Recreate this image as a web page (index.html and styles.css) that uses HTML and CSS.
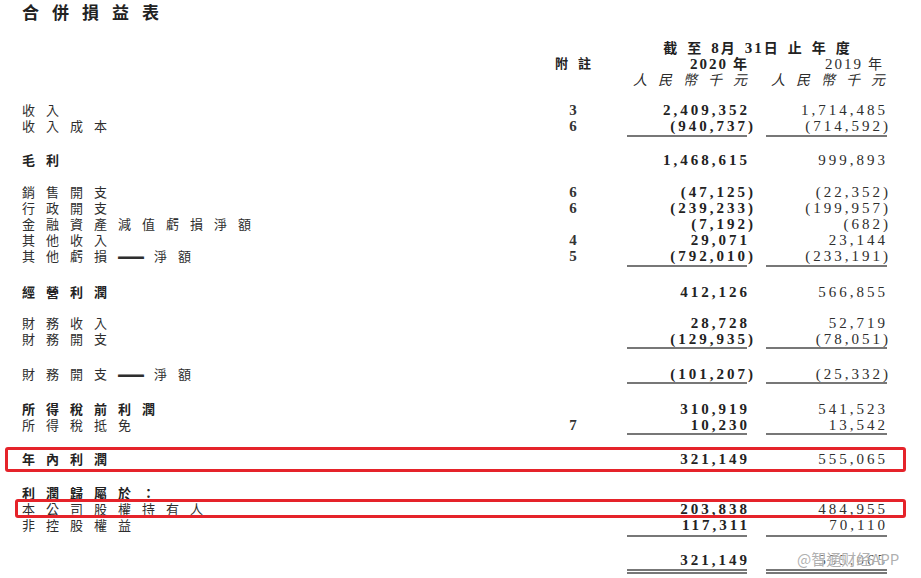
FILE: index.html
```html
<!DOCTYPE html>
<html lang="zh-Hant">
<head>
<meta charset="utf-8">
<title>合併損益表</title>
<link rel="stylesheet" href="styles.css">
</head>
<body>
<div class="page">
  <h1 class="title">合併損益表</h1>

  <div class="row period-row sp15">
    <span></span><span></span>
    <span class="period">截至<span class="num">8</span>月<span class="num">31</span>日止年度</span>
  </div>
  <div class="row">
    <span></span>
    <span class="note hdr">附註</span>
    <span class="val v1 yr b"><span class="num">2020</span>年</span>
    <span class="val v2 yr"><span class="num">2019</span>年</span>
  </div>
  <div class="row">
    <span></span><span></span>
    <span class="val v1 unit">人民幣千元</span>
    <span class="val v2 unit">人民幣千元</span>
  </div>

  <div class="row sp15"><span class="lbl">收入</span><span class="note">3</span><span class="val v1 b">2,409,352</span><span class="val v2">1,714,485</span></div>
  <div class="row"><span class="lbl">收入成本</span><span class="note">6</span><span class="val v1 b neg">(940,737)</span><span class="val v2 neg">(714,592)</span></div>
  <div class="rule sp1"><span></span><span></span><i class="ln"></i><i class="ln ln2"></i></div>

  <div class="row sp15"><span class="lbl b">毛利</span><span class="note"></span><span class="val v1 b">1,468,615</span><span class="val v2">999,893</span></div>

  <div class="row sp16"><span class="lbl">銷售開支</span><span class="note">6</span><span class="val v1 b neg">(47,125)</span><span class="val v2 neg">(22,352)</span></div>
  <div class="row"><span class="lbl">行政開支</span><span class="note">6</span><span class="val v1 b neg">(239,233)</span><span class="val v2 neg">(199,957)</span></div>
  <div class="row"><span class="lbl">金融資產減值虧損淨額</span><span class="note"></span><span class="val v1 b neg">(7,192)</span><span class="val v2 neg">(682)</span></div>
  <div class="row"><span class="lbl">其他收入</span><span class="note">4</span><span class="val v1 b">29,071</span><span class="val v2">23,144</span></div>
  <div class="row"><span class="lbl">其他虧損<span class="dash">—</span>淨額</span><span class="note">5</span><span class="val v1 b neg">(792,010)</span><span class="val v2 neg">(233,191)</span></div>
  <div class="rule sp1"><span></span><span></span><i class="ln"></i><i class="ln ln2"></i></div>

  <div class="row sp17"><span class="lbl b">經營利潤</span><span class="note"></span><span class="val v1 b">412,126</span><span class="val v2">566,855</span></div>

  <div class="row sp15"><span class="lbl">財務收入</span><span class="note"></span><span class="val v1 b">28,728</span><span class="val v2">52,719</span></div>
  <div class="row"><span class="lbl">財務開支</span><span class="note"></span><span class="val v1 b neg">(129,935)</span><span class="val v2 neg">(78,051)</span></div>
  <div class="rule"><span></span><span></span><i class="ln"></i><i class="ln ln2"></i></div>

  <div class="row sp17"><span class="lbl">財務開支<span class="dash">—</span>淨額</span><span class="note"></span><span class="val v1 b neg">(101,207)</span><span class="val v2 neg">(25,332)</span></div>
  <div class="rule"><span></span><span></span><i class="ln"></i><i class="ln ln2"></i></div>

  <div class="row sp17"><span class="lbl b">所得稅前利潤</span><span class="note"></span><span class="val v1 b">310,919</span><span class="val v2">541,523</span></div>
  <div class="row"><span class="lbl">所得稅抵免</span><span class="note">7</span><span class="val v1 b">10,230</span><span class="val v2">13,542</span></div>
  <div class="rule"><span></span><span></span><i class="ln"></i><i class="ln ln2"></i></div>

  <div class="row sp16 mark mark-a"><span class="lbl b">年內利潤</span><span class="note"></span><span class="val v1 b">321,149</span><span class="val v2">555,065</span></div>

  <div class="row sp18"><span class="lbl b">利潤歸屬於：</span></div>
  <div class="row mark mark-b"><span class="lbl">本公司股權持有人</span><span class="note"></span><span class="val v1 b">203,838</span><span class="val v2">484,955</span></div>
  <div class="row"><span class="lbl">非控股權益</span><span class="note"></span><span class="val v1 b">117,311</span><span class="val v2">70,110</span></div>
  <div class="rule sp2"><span></span><span></span><i class="ln"></i><i class="ln ln2"></i></div>

  <div class="row sp15"><span class="lbl"></span><span class="note"></span><span class="val v1 b">321,149</span><span class="val v2">555,065</span></div>
  <div class="rule dbl sp1"><span></span><span></span><i class="ln"></i><i class="ln ln2"></i></div>

  <div class="watermark">@智通财经APP</div>
</div>
</body>
</html>
```

FILE: styles.css
```css
html, body {
  margin: 0;
  padding: 0;
  background: #ffffff;
}

.page {
  position: relative;
  width: 921px;
  height: 578px;
  padding-left: 22px;
  box-sizing: border-box;
  color: #2b2b2b;
  font-family: "Noto Sans CJK TC", "Noto Sans CJK SC", sans-serif;
  overflow: hidden;
}

.title {
  margin: 0;
  height: 24px;
  line-height: 23px;
  font-size: 17px;
  font-weight: 700;
  letter-spacing: 13px;
  color: #222;
}

.row,
.rule {
  display: grid;
  grid-template-columns: 528px 46px 151px 138px;
  width: 863px;
}

.row {
  height: 16px;
  line-height: 16px;
}

.sp1 { margin-top: 1px; }
.sp2 { margin-top: 2px; }
.sp15 { margin-top: 15px; }
.sp16 { margin-top: 16px; }
.sp17 { margin-top: 17px; }
.sp18 { margin-top: 18px; }

.lbl {
  font-size: 13px;
  letter-spacing: 11px;
  white-space: nowrap;
  color: #2e2e2e;
}

.lbl.b {
  font-weight: 700;
  color: #222;
}

.dash {
  display: inline-block;
  font-family: "Liberation Sans", sans-serif;
  font-weight: 700;
  font-size: 26px;
  line-height: 16px;
  height: 16px;
  vertical-align: top;
  letter-spacing: 10px;
}

.note {
  text-align: center;
  font-family: "Liberation Serif", serif;
  font-weight: 700;
  font-size: 15px;
  color: #333;
}

.note.hdr {
  margin: 0 -12px;
  padding-left: 10px;
  font-family: "Noto Sans CJK TC", sans-serif;
  font-size: 13px;
  letter-spacing: 10px;
  white-space: nowrap;
  color: #222;
}

.val {
  text-align: right;
  font-family: "Liberation Serif", serif;
  font-size: 15px;
  letter-spacing: 3px;
  margin-right: -3px;
  white-space: nowrap;
  color: #2e2e2e;
}

.val.b {
  font-weight: 700;
  color: #222;
}

.v1.neg { margin-right: -9px; }
.v2.neg { margin-right: -6px; }

.period-row .period {
  grid-column: 3 / 5;
  padding-left: 32px;
  text-align: center;
  font-size: 14px;
  font-weight: 700;
  letter-spacing: 10px;
  margin-right: -10px;
  white-space: nowrap;
  color: #222;
}

.num {
  font-family: "Liberation Serif", serif;
  font-size: 15px;
  letter-spacing: 2px;
}

.yr {
  font-family: "Noto Sans CJK TC", sans-serif;
  font-size: 14px;
  letter-spacing: 0;
  margin-right: 0;
}

.yr .num {
  margin-right: 5px;
}

.v2.yr {
  margin-right: 3px;
  font-weight: 400;
}

.unit {
  font-family: "Noto Sans CJK TC", sans-serif;
  font-size: 14px;
  font-style: italic;
  font-weight: 400;
  letter-spacing: 11px;
  margin-right: -11px;
  color: #2b2b2b;
}

.rule {
  height: 2px;
}

.rule .ln {
  display: block;
  justify-self: end;
  width: 120px;
  height: 2px;
  background: #777;
}

.rule .ln2 {
  width: 121px;
  margin-right: -2px;
}

.rule.dbl {
  height: 5px;
}

.rule.dbl .ln {
  height: 1px;
  border-top: 2px solid #777;
  border-bottom: 2px solid #777;
  background: transparent;
}

.mark {
  position: relative;
}

.mark::after {
  content: "";
  position: absolute;
  border: 3px solid #e5232a;
  border-radius: 3px;
  pointer-events: none;
}

.mark-a::after {
  top: -4px;
  bottom: -5px;
  left: -17px;
  right: -21px;
}

.mark-b::after {
  top: -2px;
  bottom: -1px;
  left: -7px;
  right: -21px;
}

.watermark {
  position: absolute;
  left: 797px;
  top: 549px;
  font-family: "Noto Sans CJK SC", sans-serif;
  font-size: 15px;
  line-height: 20px;
  color: rgba(150, 150, 150, 0.75);
  text-shadow: 0 0 2px #fff, 0 0 2px #fff;
  white-space: nowrap;
}
```
